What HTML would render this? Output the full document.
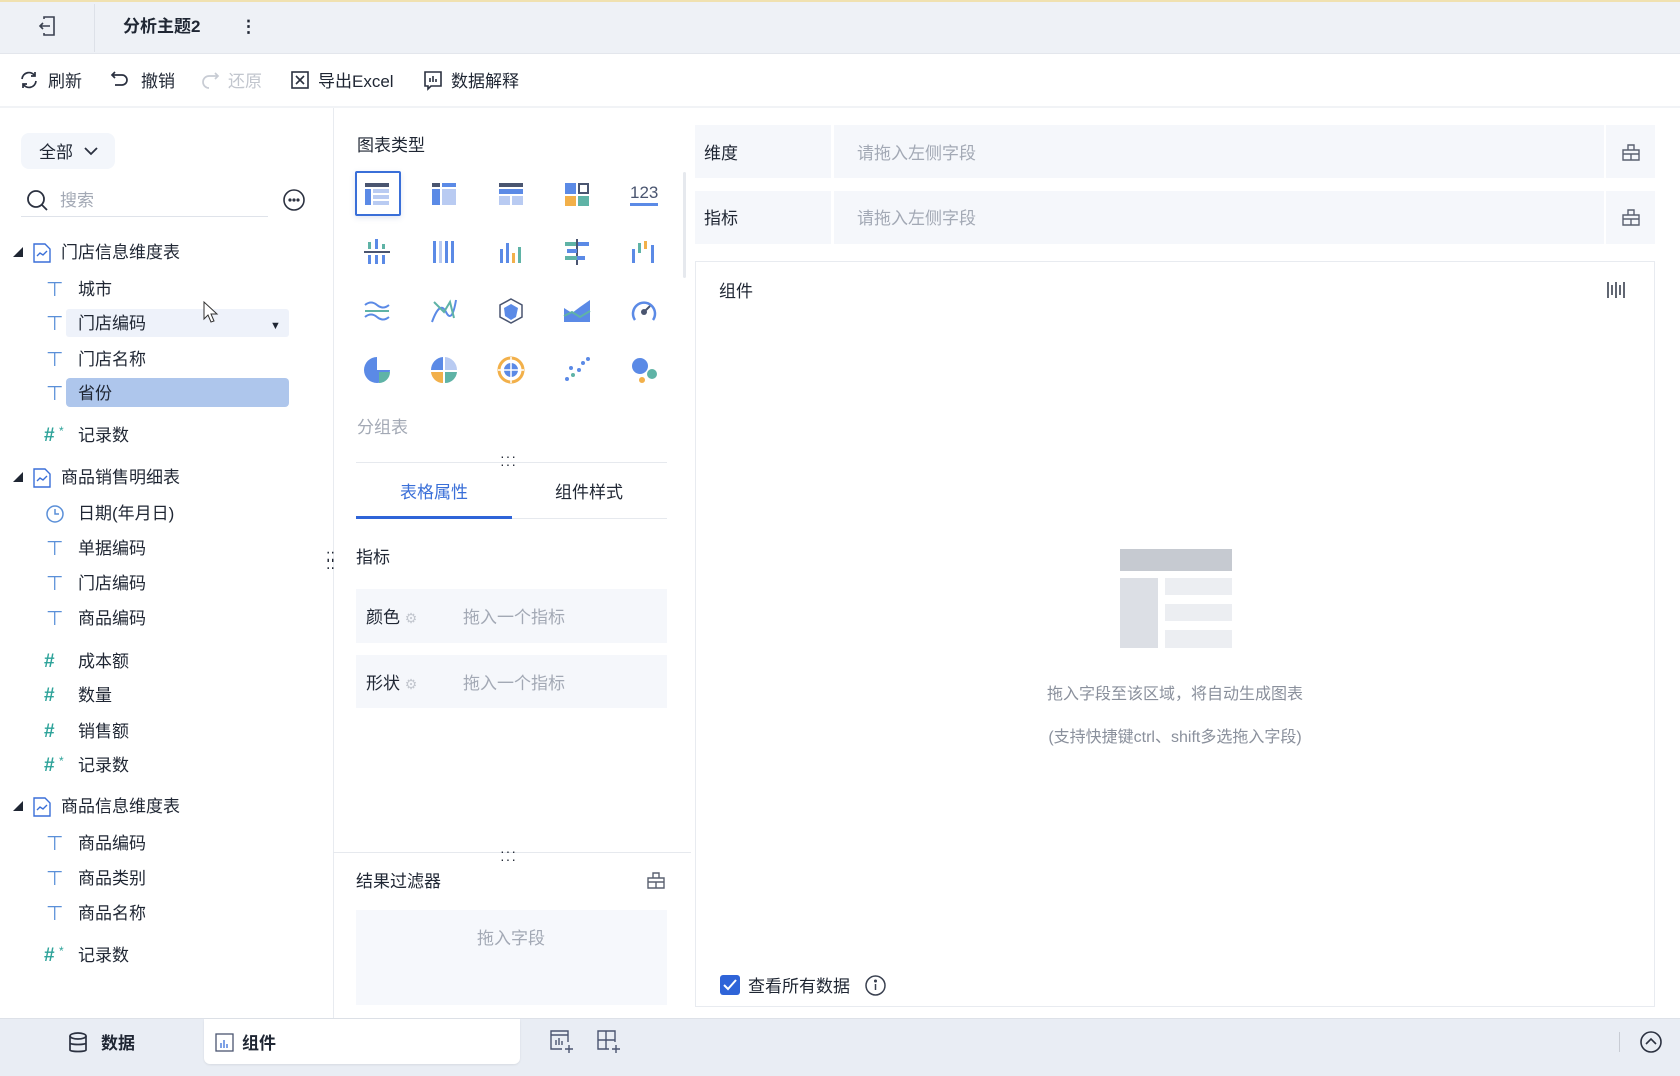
<!DOCTYPE html>
<html><head><meta charset="utf-8"><style>
*{margin:0;padding:0;box-sizing:border-box}
body{width:1680px;height:1076px;overflow:hidden;background:#fff;font-family:"Liberation Sans","Noto Sans CJK SC",sans-serif;color:#1f2633;font-size:17px;position:relative}
.a{position:absolute}
.t{position:absolute;white-space:nowrap;line-height:20px;margin-top:2px}
.g{color:#a3a9b5}
svg{position:absolute;overflow:visible}
</style></head><body>
<!-- top bar -->
<div class="a" style="left:0;top:0;width:1680px;height:54px;background:#eef1f6;border-top:2px solid #f0e1b0;border-bottom:1px solid #e3e6ec"></div>
<div class="a" style="left:94px;top:4px;width:1px;height:48px;background:#dde1e8"></div>
<svg style="left:38px;top:15px" width="20" height="22" viewBox="0 0 20 22" fill="none" stroke="#3a4150" stroke-width="1.6"><path d="M6 4V2h10v18H6v-2"/><path d="M12 11H2M5 8l-3 3 3 3"/></svg>
<div class="t" style="left:123px;top:15px;font-weight:bold;font-size:17px">分析主题2</div>
<div class="t" style="left:240px;top:15px;font-weight:bold">⋮</div>
<!-- toolbar -->
<div class="a" style="left:0;top:106px;width:1680px;height:2px;background:#f1f3f6"></div>
<svg style="left:19px;top:70px" width="20" height="20" viewBox="0 0 20 20" fill="none" stroke="#2b3140" stroke-width="1.7"><path d="M3 9a7 7 0 0 1 13-3M17 11a7 7 0 0 1-13 3"/><path d="M16 2v4h-4M4 18v-4h4"/></svg>
<div class="t" style="left:48px;top:70px">刷新</div>
<svg style="left:110px;top:70px" width="20" height="20" viewBox="0 0 20 20" fill="none" stroke="#2b3140" stroke-width="1.7"><path d="M5 2L2 5l3 3"/><path d="M2 5h10a5 5 0 0 1 0 10H5"/></svg>
<div class="t" style="left:141px;top:70px">撤销</div>
<svg style="left:200px;top:70px" width="20" height="20" viewBox="0 0 20 20" fill="none" stroke="#c8ccd4" stroke-width="1.7"><path d="M15 3l3 3-3 3"/><path d="M18 6H9a6 6 0 0 0 0 12"/></svg>
<div class="t g" style="left:228px;top:70px;color:#c2c6ce">还原</div>
<svg style="left:290px;top:70px" width="20" height="20" viewBox="0 0 20 20" fill="none" stroke="#2b3140" stroke-width="1.6"><rect x="2" y="2" width="16" height="16"/><path d="M6 6l8 8M14 6l-8 8"/></svg>
<div class="t" style="left:318px;top:70px">导出Excel</div>
<svg style="left:423px;top:70px" width="20" height="21" viewBox="0 0 20 21" fill="none" stroke="#2b3140" stroke-width="1.6"><path d="M2 2h16v14H8l-3 3v-3H2z"/><path d="M7 12V8M10 12V6M13 12V9"/></svg>
<div class="t" style="left:451px;top:70px">数据解释</div>
<!-- left panel -->
<div class="a" style="left:333px;top:108px;width:1px;height:910px;background:#e8ebf0"></div>
<div class="a" style="left:21px;top:133px;width:94px;height:36px;background:#f3f6fb;border-radius:8px"></div>
<div class="t" style="left:39px;top:141px">全部</div>
<svg style="left:84px;top:146px" width="14" height="10" viewBox="0 0 14 10" fill="none" stroke="#2b3140" stroke-width="1.8"><path d="M1 2l6 6 6-6"/></svg>
<svg style="left:27px;top:190px" width="22" height="22" viewBox="0 0 22 22" fill="none" stroke="#2b3140" stroke-width="1.8"><circle cx="9" cy="9" r="8"/><path d="M15 15l5 5"/></svg>
<div class="t g" style="left:60px;top:189px">搜索</div>
<div class="a" style="left:21px;top:216px;width:247px;height:1px;background:#dfe3ea"></div>
<svg style="left:283px;top:189px" width="22" height="22" viewBox="0 0 22 22" fill="none" stroke="#2b3140" stroke-width="1.6"><circle cx="11" cy="11" r="10"/><circle cx="7" cy="11" r=".8" fill="#2b3140"/><circle cx="11" cy="11" r=".8" fill="#2b3140"/><circle cx="15" cy="11" r=".8" fill="#2b3140"/></svg>
<div class="a" style="left:66px;top:309px;width:223px;height:28px;background:#eef2fa;border-radius:3px"></div>
<div class="a" style="left:66px;top:378px;width:223px;height:29px;background:#aec6ec;border-radius:4px"></div>
<div class="t" style="left:270px;top:314px;font-size:11px">▼</div>
<svg style="left:203px;top:301px" width="16" height="24" viewBox="0 0 16 24" fill="#fff" stroke="#333" stroke-width="1"><path d="M1 1v17l4-4 3 7 3-1-3-7h6z"/></svg>
<div id="tree"></div>
<!-- mid panel -->
<div class="t" style="left:357px;top:134px">图表类型</div>
<div class="a" style="left:683px;top:172px;width:3px;height:106px;background:#e6e9ee;border-radius:2px"></div>
<div class="a" style="left:355px;top:171px;width:46px;height:45px;border:2px solid #3a6fd8;border-radius:2px;box-shadow:0 2px 6px rgba(60,90,160,.15)"></div>
<div id="icons"></div>
<div class="t g" style="left:357px;top:416px">分组表</div>
<div class="t" style="left:500px;top:450px;font-size:14px;letter-spacing:1px;line-height:8px">···<br>···</div>
<div class="a" style="left:356px;top:462px;width:311px;height:1px;background:#e6e9ee"></div>
<div class="t" style="left:400px;top:481px;color:#3a6fd8">表格属性</div>
<div class="t" style="left:555px;top:481px">组件样式</div>
<div class="a" style="left:356px;top:518px;width:311px;height:1px;background:#e6e9ee"></div>
<div class="a" style="left:356px;top:516px;width:156px;height:3px;background:#2f64d8"></div>
<div class="t" style="left:356px;top:546px">指标</div>
<div class="t" style="left:326px;top:552px;font-size:14px;line-height:7px">⁚⁚<br>⁚⁚</div>
<div class="a" style="left:356px;top:589px;width:311px;height:54px;background:#f5f7fb"></div>
<div class="a" style="left:356px;top:655px;width:311px;height:53px;background:#f5f7fb"></div>
<div class="t" style="left:366px;top:606px">颜色 <span style="color:#c3c7cf;font-size:14px">⚙</span></div>
<div class="t g" style="left:463px;top:606px">拖入一个指标</div>
<div class="t" style="left:366px;top:672px">形状 <span style="color:#c3c7cf;font-size:14px">⚙</span></div>
<div class="t g" style="left:463px;top:672px">拖入一个指标</div>
<div class="a" style="left:333px;top:852px;width:358px;height:1px;background:#e6e9ee"></div>
<div class="t" style="left:500px;top:845px;font-size:14px;letter-spacing:1px;line-height:8px">···<br>···</div>
<div class="t" style="left:356px;top:870px">结果过滤器</div>
<svg style="left:647px;top:871px" width="18" height="18" viewBox="0 0 18 18" fill="none" stroke="#5a6070" stroke-width="1.4"><path d="M1 7h16v10H1zM6 7V2h6v5M1 11h16M9 11v6"/></svg>
<div class="a" style="left:356px;top:910px;width:311px;height:95px;background:#f6f8fc"></div>
<div class="t g" style="left:477px;top:927px">拖入字段</div>
<!-- right -->
<div class="a" style="left:695px;top:125px;width:136px;height:53px;background:#f5f7fb"></div>
<div class="a" style="left:834px;top:125px;width:770px;height:53px;background:#f5f7fb"></div>
<div class="a" style="left:1606px;top:125px;width:49px;height:53px;background:#f5f7fb"></div>
<div class="a" style="left:695px;top:191px;width:136px;height:53px;background:#f5f7fb"></div>
<div class="a" style="left:834px;top:191px;width:770px;height:53px;background:#f5f7fb"></div>
<div class="a" style="left:1606px;top:191px;width:49px;height:53px;background:#f5f7fb"></div>
<div class="t" style="left:704px;top:142px">维度</div>
<div class="t g" style="left:857px;top:142px">请拖入左侧字段</div>
<div class="t" style="left:704px;top:207px">指标</div>
<div class="t g" style="left:857px;top:207px">请拖入左侧字段</div>
<svg style="left:1622px;top:143px" width="18" height="18" viewBox="0 0 18 18" fill="none" stroke="#5a6070" stroke-width="1.4"><path d="M1 7h16v10H1zM6 7V2h6v5M1 11h16M9 11v6"/></svg>
<svg style="left:1622px;top:208px" width="18" height="18" viewBox="0 0 18 18" fill="none" stroke="#5a6070" stroke-width="1.4"><path d="M1 7h16v10H1zM6 7V2h6v5M1 11h16M9 11v6"/></svg>
<div class="a" style="left:695px;top:261px;width:960px;height:746px;border:1px solid #e8ebf0"></div>
<div class="t" style="left:719px;top:280px">组件</div>
<svg style="left:1606px;top:281px" width="20" height="18" viewBox="0 0 20 18" stroke="#3a4150" stroke-width="1.6"><path d="M2 1v16M6 4v10M10 1v16M14 4v10M18 1v16"/></svg>
<div class="a" style="left:1120px;top:549px;width:112px;height:22px;background:#c6cad1"></div>
<div class="a" style="left:1120px;top:578px;width:38px;height:70px;background:#dcdfe5"></div>
<div class="a" style="left:1165px;top:578px;width:67px;height:17px;background:#eceef2"></div>
<div class="a" style="left:1165px;top:604px;width:67px;height:17px;background:#eceef2"></div>
<div class="a" style="left:1165px;top:630px;width:67px;height:18px;background:#eceef2"></div>
<div class="t" style="left:1037px;top:683px;width:276px;text-align:center;color:#8a909c;font-size:16px">拖入字段至该区域，将自动生成图表</div>
<div class="t" style="left:1037px;top:726px;width:276px;text-align:center;color:#8a909c;font-size:16px">(支持快捷键ctrl、shift多选拖入字段)</div>
<div class="a" style="left:720px;top:975px;width:20px;height:20px;background:#2f64d8;border-radius:3px"></div>
<svg style="left:723px;top:979px" width="14" height="12" viewBox="0 0 14 12" fill="none" stroke="#fff" stroke-width="2"><path d="M1 6l4 4 8-9"/></svg>
<div class="t" style="left:748px;top:975px">查看所有数据</div>
<svg style="left:865px;top:975px" width="21" height="21" viewBox="0 0 21 21" fill="none" stroke="#3a4150" stroke-width="1.5"><circle cx="10.5" cy="10.5" r="9.5"/><path d="M10.5 9v6"/><circle cx="10.5" cy="6" r=".8" fill="#3a4150"/></svg>
<!-- bottom bar -->
<div class="a" style="left:0;top:1018px;width:1680px;height:58px;background:#e9edf4;border-top:1px solid #dde1e8"></div>
<div class="a" style="left:204px;top:1019px;width:316px;height:45px;background:#fff;border-radius:0 0 6px 6px;box-shadow:0 1px 2px rgba(0,0,0,.08)"></div>
<svg style="left:68px;top:1032px" width="20" height="22" viewBox="0 0 20 22" fill="none" stroke="#2b3140" stroke-width="1.7"><ellipse cx="10" cy="4" rx="8" ry="3"/><path d="M2 4v14c0 2 16 2 16 0V4M2 11c0 2 16 2 16 0"/></svg>
<div class="t" style="left:101px;top:1032px;font-weight:bold">数据</div>
<svg style="left:215px;top:1033px" width="19" height="19" viewBox="0 0 19 19" fill="none" stroke="#4a5570" stroke-width="1.3"><rect x="1" y="1" width="17" height="17"/><path d="M6 15v-5M9 15V7M12 15v-4" stroke="#3a6fd8"/></svg>
<div class="t" style="left:242px;top:1032px;font-weight:bold">组件</div>
<svg style="left:550px;top:1030px" width="24" height="24" viewBox="0 0 24 24" fill="none" stroke="#4a5570" stroke-width="1.4"><path d="M18 12V1H1v18h11"/><path d="M1 5h17M6 15v-5M9 15V8M12 15v-4" /><path d="M19 15v8M15 19h8"/></svg>
<svg style="left:597px;top:1030px" width="24" height="24" viewBox="0 0 24 24" fill="none" stroke="#4a5570" stroke-width="1.4"><path d="M18 12V1H1v18h11M1 10h17M9 1v18"/><path d="M19 15v8M15 19h8"/></svg>
<div class="a" style="left:1619px;top:1032px;width:1px;height:20px;background:#c8ccd4"></div>
<svg style="left:1640px;top:1031px" width="22" height="22" viewBox="0 0 22 22" fill="none" stroke="#2b3140" stroke-width="1.6"><circle cx="11" cy="11" r="10"/><path d="M6 13l5-5 5 5"/></svg>
<script>
var rows=[[251,'h','门店信息维度表'],[288,'T','城市'],[322,'T','门店编码'],[358,'T','门店名称'],[392,'T','省份'],[434,'#*','记录数'],[476,'h','商品销售明细表'],[512,'c','日期(年月日)'],[547,'T','单据编码'],[582,'T','门店编码'],[617,'T','商品编码'],[660,'#','成本额'],[694,'#','数量'],[730,'#','销售额'],[764,'#*','记录数'],[805,'h','商品信息维度表'],[842,'T','商品编码'],[877,'T','商品类别'],[912,'T','商品名称'],[954,'#*','记录数']];
var h='';
rows.forEach(function(r){var y=r[0]-10;
if(r[1]=='h'){h+='<div class="t" style="left:13px;top:'+(y+1)+'px;font-size:10px">◢</div><svg style="left:33px;top:'+(y+2)+'px" width="18" height="20" viewBox="0 0 18 20" fill="none" stroke="#3a6fd8" stroke-width="1.4"><path d="M1 1h11l5 5v13H1z"/><path d="M4 13l3-3 3 2 4-4"/></svg><div class="t" style="left:61px;top:'+y+'px">'+r[2]+'</div>';}
else{var ic='';
if(r[1]=='T')ic='<div class="t" style="left:46px;top:'+y+'px;color:#5a8fd8;font-size:20px;font-family:Liberation Sans">⊤</div>';
if(r[1]=='c')ic='<svg style="left:46px;top:'+(y+3)+'px" width="18" height="18" viewBox="0 0 18 18" fill="none" stroke="#5a8fd8" stroke-width="1.5"><circle cx="9" cy="9" r="8"/><path d="M9 4v5h4"/></svg>';
if(r[1][0]=='#')ic='<div class="t" style="left:44px;top:'+y+'px;color:#2ea39a;font-weight:bold;font-size:19px">#</div>'+(r[1]=='#*'?'<div class="t" style="left:59px;top:'+(y-5)+'px;color:#2ea39a;font-size:12px">*</div>':'');
h+=ic+'<div class="t" style="left:78px;top:'+y+'px">'+r[2]+'</div>';}
});
document.getElementById('tree').outerHTML=h;
var B='#5b8ae6',L='#b9cbf2',D='#4a5570',O='#f2b04a',G='#5fb3a6';
var ics=[
'<rect x="2" y="2" width="24" height="4" fill="'+D+'"/><rect x="2" y="8" width="6" height="16" fill="'+B+'"/><rect x="10" y="8" width="16" height="4" fill="'+L+'"/><rect x="10" y="14" width="16" height="4" fill="'+L+'"/><rect x="10" y="20" width="16" height="4" fill="'+L+'"/>',
'<rect x="2" y="2" width="8" height="4" fill="'+D+'"/><rect x="12" y="2" width="14" height="4" fill="'+B+'"/><rect x="2" y="8" width="8" height="16" fill="'+B+'"/><rect x="12" y="8" width="14" height="16" fill="'+L+'"/>',
'<rect x="2" y="2" width="24" height="4" fill="'+D+'"/><rect x="2" y="8" width="24" height="5" fill="'+B+'"/><rect x="2" y="15" width="11" height="9" fill="'+L+'"/><rect x="15" y="15" width="11" height="9" fill="'+L+'"/>',
'<rect x="2" y="2" width="11" height="11" fill="'+B+'"/><rect x="16" y="3" width="9" height="9" fill="none" stroke="'+D+'" stroke-width="2"/><rect x="2" y="15" width="11" height="10" fill="'+O+'"/><rect x="15" y="15" width="11" height="10" fill="'+G+'"/>',
'<text x="0" y="17" font-size="17" fill="'+D+'" font-family="Liberation Sans">123</text><rect x="0" y="22" width="28" height="3" fill="'+B+'"/>',
'<rect x="5" y="3" width="3" height="7" fill="'+G+'"/><rect x="12" y="0" width="3" height="10" fill="'+B+'"/><rect x="19" y="5" width="3" height="5" fill="'+G+'"/><rect x="1" y="12" width="26" height="2" fill="'+D+'"/><rect x="5" y="16" width="3" height="9" fill="'+B+'"/><rect x="12" y="16" width="3" height="9" fill="'+B+'"/><rect x="19" y="16" width="3" height="9" fill="'+B+'"/>',
'<rect x="3" y="2" width="3" height="22" fill="'+B+'"/><rect x="9" y="2" width="3" height="22" fill="'+L+'"/><rect x="15" y="2" width="3" height="22" fill="'+B+'"/><rect x="21" y="2" width="3" height="22" fill="'+B+'"/>',
'<rect x="3" y="10" width="3" height="14" fill="'+B+'"/><rect x="9" y="4" width="3" height="20" fill="'+B+'"/><rect x="15" y="14" width="3" height="10" fill="'+O+'"/><rect x="21" y="8" width="3" height="16" fill="'+G+'"/>',
'<rect x="2" y="3" width="12" height="4" fill="'+G+'"/><rect x="14" y="3" width="12" height="4" fill="'+B+'"/><rect x="13" y="0" width="2" height="26" fill="'+D+'"/><rect x="4" y="10" width="10" height="4" fill="'+B+'"/><rect x="2" y="17" width="12" height="4" fill="'+G+'"/><rect x="14" y="17" width="8" height="4" fill="'+B+'"/>',
'<rect x="2" y="10" width="3" height="14" fill="'+B+'"/><rect x="8" y="4" width="3" height="10" fill="'+G+'"/><rect x="14" y="2" width="3" height="8" fill="'+O+'"/><rect x="21" y="6" width="3" height="18" fill="'+B+'"/>',
'<path d="M2 7q6-5 12 0t12 0M2 19q6-5 12 0t12 0" fill="none" stroke="'+B+'" stroke-width="2"/><path d="M2 13h24" stroke="'+G+'" stroke-width="2"/>',
'<path d="M2 24Q10 2 16 14T26 2" fill="none" stroke="'+B+'" stroke-width="2"/><path d="M4 4l10 10 6-10 4 16" fill="none" stroke="'+G+'" stroke-width="2"/>',
'<path d="M14 1l11 6v12l-11 6-11-6V7z" fill="none" stroke="'+D+'" stroke-width="1.5"/><path d="M14 6l7 4-2 9-5 3-6-4-1-8z" fill="'+B+'"/>',
'<path d="M1 10l8 5 8-6 10-7v22H1z" fill="'+B+'"/><path d="M1 18l8-4 8 5 10-6" fill="none" stroke="'+G+'" stroke-width="2"/>',
'<path d="M5 22A11 11 0 1 1 23 22" fill="none" stroke="'+B+'" stroke-width="2.5"/><circle cx="14" cy="14" r="3" fill="'+D+'"/><path d="M14 14l6-6" stroke="'+D+'" stroke-width="2"/>',
'<path d="M14 1A13 13 0 1 0 27 14H14z" fill="'+B+'"/><path d="M16 16h11A11 11 0 0 1 16 27z" fill="'+G+'"/>',
'<path d="M13 1v13H1A13 13 0 0 1 13 1z" fill="'+B+'"/><path d="M15 1a13 13 0 0 1 12 13H15z" fill="'+L+'"/><path d="M1 16h12v11A12 12 0 0 1 1 16z" fill="'+O+'"/><path d="M15 16h12a12 12 0 0 1-12 11z" fill="'+G+'"/>',
'<circle cx="14" cy="14" r="12" fill="none" stroke="'+O+'" stroke-width="3"/><circle cx="14" cy="14" r="7" fill="'+B+'"/><path d="M14 1v26M1 14h26" stroke="#fff" stroke-width="1.5"/>',
'<circle cx="4" cy="23" r="2" fill="'+B+'"/><circle cx="10" cy="19" r="2" fill="'+G+'"/><circle cx="8" cy="12" r="2" fill="'+B+'"/><circle cx="16" cy="14" r="2" fill="'+B+'"/><circle cx="20" cy="7" r="2" fill="'+B+'"/><circle cx="25" cy="3" r="2" fill="'+B+'"/>',
'<circle cx="10" cy="10" r="8" fill="'+B+'"/><circle cx="22" cy="18" r="5" fill="'+G+'"/><circle cx="12" cy="24" r="3" fill="'+O+'"/>'];
var xs=[377,444,511,577,644],ys=[194,252,311,369],s='';
ics.forEach(function(c,i){s+='<svg style="left:'+(xs[i%5]-14)+'px;top:'+(ys[Math.floor(i/5)]-13)+'px" width="28" height="27" viewBox="0 0 28 27">'+c+'</svg>';});
document.getElementById('icons').outerHTML=s;
</script>
</body></html>
